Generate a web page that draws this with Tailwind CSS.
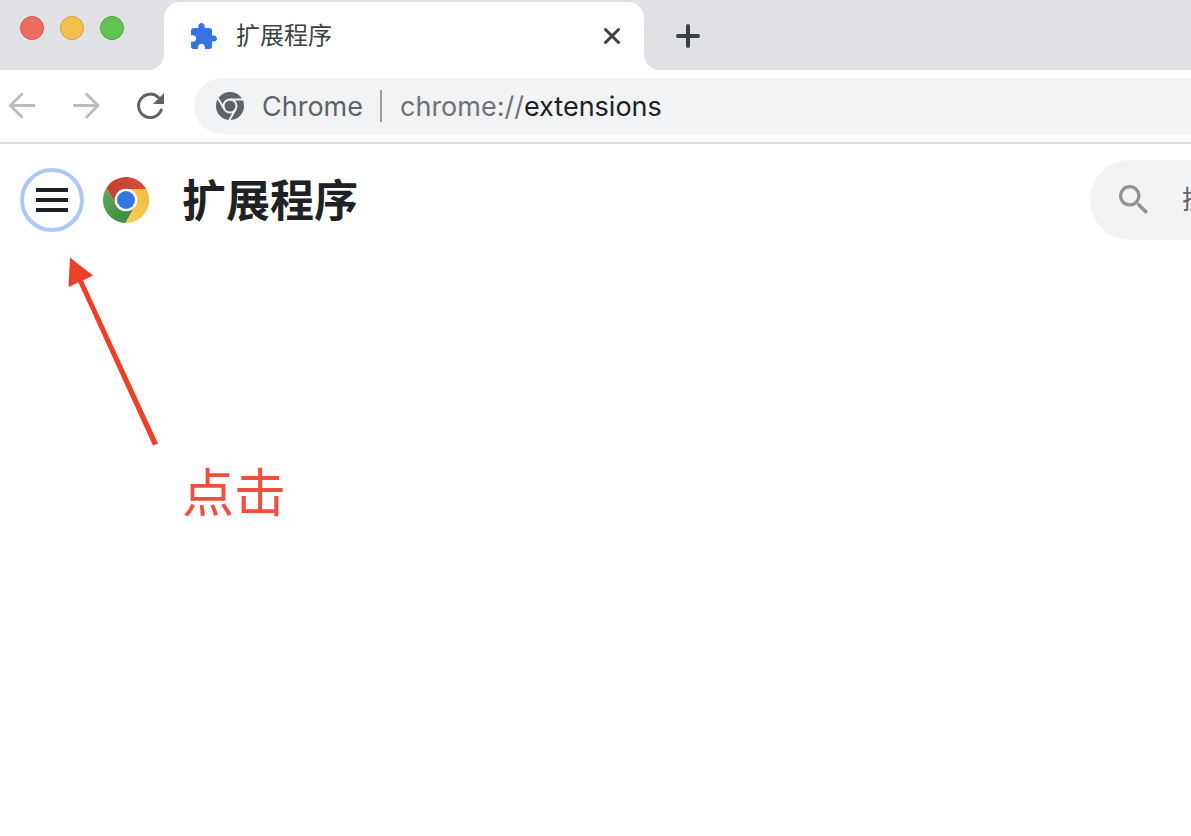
<!DOCTYPE html>
<html lang="zh-CN">
<head>
<meta charset="utf-8">
<meta name="viewport" content="width=device-width, initial-scale=1">
<title>扩展程序</title>
<script src="https://cdn.jsdelivr.net/npm/@tailwindcss/browser@4"></script>
</head>
<body class="min-h-screen bg-white font-['Inter','Noto_Sans_CJK_SC',sans-serif] text-[#202124]">
<!-- Tab strip -->
<header class="flex h-[70px]">
  <div class="flex w-41 shrink-0 gap-4 rounded-br-2xl bg-[#dfe1e5] pt-4 pl-5">
    <button aria-label="关闭窗口" class="size-6 rounded-full border border-[#d8554c] bg-[#ed6a5e]"></button>
    <button aria-label="最小化" class="size-6 rounded-full border border-[#d9a040] bg-[#f5bf4f]"></button>
    <button aria-label="最大化" class="size-6 rounded-full border border-[#4fa73c] bg-[#61c554]"></button>
  </div>
  <div class="w-120 shrink-0 bg-[linear-gradient(#dfe1e5_50%,#fff_50%)] pt-0.5">
    <div class="flex h-17 items-center rounded-t-2xl bg-white pr-5 pl-[27px]">
      <svg class="size-[26px]" viewBox="2 1 21 21" fill="#3574e2" aria-hidden="true"><path d="M20.500 11H19V7c0-1.100-.900-2-2-2h-4V3.500C13 2.120 11.880 1 10.500 1S8 2.120 8 3.500V5H4c-1.100 0-1.990.900-1.990 2v3.800H3.500c1.490 0 2.700 1.210 2.700 2.700s-1.210 2.700-2.700 2.700H2V20c0 1.100.900 2 2 2h3.800v-1.500c0-1.490 1.210-2.700 2.700-2.700s2.700 1.210 2.700 2.700V22H17c1.100 0 2-.900 2-2v-4h1.500c1.380 0 2.500-1.120 2.500-2.500S21.880 11 20.500 11z"/></svg>
      <span class="ml-[19px] flex-1 text-2xl text-[#3c4043]">扩展程序</span>
      <button aria-label="关闭标签页"><svg class="size-6" viewBox="0 0 24 24" fill="none" stroke="#3c4043" stroke-width="3" stroke-linecap="round" aria-hidden="true"><path d="M5.500 5.500l13 13M18.500 5.500l-13 13"/></svg></button>
    </div>
  </div>
  <div class="flex flex-1 items-center rounded-bl-2xl bg-[#dfe1e5] pt-0.5 pl-8">
    <button aria-label="新建标签页"><svg class="size-6" viewBox="0 0 24 24" fill="none" stroke="#3c4043" stroke-width="4" stroke-linecap="round" aria-hidden="true"><path d="M2 12h20M12 2v20"/></svg></button>
  </div>
</header>
<!-- Toolbar -->
<nav class="flex h-[74px] items-center border-b-2 border-[#dcdcdc] pl-2">
  <button aria-label="后退"><svg class="size-7" viewBox="0 0 28 28" fill="none" stroke="#babcbe" stroke-width="2.800" stroke-linecap="round" stroke-linejoin="round" aria-hidden="true"><path d="M26 13.500H2.400M13.800 2.300L2.400 13.500 13.800 25"/></svg></button>
  <button aria-label="前进" class="ml-9"><svg class="size-7" viewBox="0 0 28 28" fill="none" stroke="#babcbe" stroke-width="2.800" stroke-linecap="round" stroke-linejoin="round" aria-hidden="true"><path d="M2.400 13.500H26M14.600 2.300L26 13.500 14.600 25"/></svg></button>
  <button aria-label="重新加载" class="ml-9"><svg class="size-7" viewBox="0 0 28 28" aria-hidden="true"><path d="M22.500 5.500A11.700 11.700 0 1 0 25.200 18" fill="none" stroke="#5f6368" stroke-width="3" stroke-linecap="round"/><path d="M28 1v11H17z" fill="#5f6368"/></svg></button>
  <div class="ml-[30px] flex h-14 flex-1 items-center rounded-l-full bg-[#f1f3f4] pl-[22px] text-[27px] text-[#5f6368]">
    <svg class="size-7 shrink-0" viewBox="-14 -14 28 28" aria-hidden="true"><circle r="14" fill="#5f6368"/><g fill="none" stroke="#f1f3f4" stroke-width="2"><circle r="6.500"/><path d="M0-6.500H13M-5.600 3.250L-12.300-8.300M5.600 3.250L-.900 14.600"/></g></svg>
    <span class="ml-[18px] pt-0.5">Chrome</span>
    <span class="mr-[18px] ml-[17px] h-8 w-0.5 bg-[#9c9ea1]"></span>
    <span class="pt-0.5 text-[#6f7275]">chrome://<span class="text-[#202124]">extensions</span></span>
  </div>
</nav>
<!-- Page header with the click hint hanging below the menu button -->
<main class="relative">
  <div class="flex h-28 items-center pl-5">
    <button aria-label="主菜单" class="flex size-16 shrink-0 flex-col items-center justify-center gap-1.5 rounded-full border-4 border-[#aec8f5]">
      <span class="h-1 w-8 bg-[#202124]"></span>
      <span class="h-1 w-8 bg-[#202124]"></span>
      <span class="h-1 w-8 bg-[#202124]"></span>
    </button>
    <svg class="ml-[19px] size-[46px] shrink-0" viewBox="-23 -23 46 46" role="img" aria-label="Chrome">
      <defs>
        <linearGradient id="r" x1="0" x2="1"><stop stop-color="#c53b2e"/><stop offset="1" stop-color="#d95040"/></linearGradient>
        <linearGradient id="g" x1="0" x2="1" y1="0" y2="1"><stop stop-color="#5aab5b"/><stop offset="1" stop-color="#3c8440"/></linearGradient>
        <linearGradient id="y" x1="0" x2="1" y1="1" y2="0"><stop stop-color="#f7ce57"/><stop offset="1" stop-color="#f2bd42"/></linearGradient>
      </defs>
      <path d="M0-11H20.200A23 23 0 0 0-19.600-12L-9.500 5.500 0 0z" fill="url(#r)"/>
      <path d="M-19.600-12A23 23 0 0 0-.6 23L9.500 5.500 0 0-9.500 5.500z" fill="url(#g)"/>
      <path d="M0-11H20.200A23 23 0 0 1-.6 23L9.500 5.500 0 0z" fill="url(#y)"/>
      <circle r="11.300" fill="#fff"/><circle r="9" fill="#3574e2"/>
    </svg>
    <h1 class="ml-[33px] flex-1 pt-0.5 text-[44px] leading-none font-bold">扩展程序</h1>
    <label class="flex h-20 w-[101px] shrink-0 items-center overflow-hidden rounded-l-full bg-[#f1f3f4] pb-0.5 pl-[29px]">
      <svg class="size-[29px] shrink-0" viewBox="3 3 17.500 17.500" fill="#8f9193" aria-hidden="true"><path d="M15.500 14h-.790l-.280-.270A6.471 6.471 0 0 0 16 9.500 6.500 6.500 0 1 0 9.500 16c1.610 0 3.090-.590 4.230-1.570l.270.280v.790l5 4.990L20.490 19l-4.990-5zm-6 0C7.010 14 5 11.990 5 9.500S7.010 5 9.500 5 14 7.010 14 9.500 11.990 14 9.500 14z"/></svg>
      <input type="text" aria-label="搜索扩展程序" placeholder="搜索扩展程序" class="ml-[34px] w-50 shrink-0 bg-transparent text-[26px] outline-none placeholder:text-[#5f6368]">
    </label>
  </div>
  <svg class="absolute top-28 left-16 h-50 w-25" viewBox="64 256 100 200" fill="#ec4126" aria-hidden="true"><path d="M70 257.500L93 275.500 83 280.500 158 443.500 153 445.500 78.500 282.500 68.500 287z"/></svg>
  <p class="absolute top-81 left-[182px] text-[52px] leading-none text-[#ee4f3e]">点击</p>
</main>
</body>
</html>
